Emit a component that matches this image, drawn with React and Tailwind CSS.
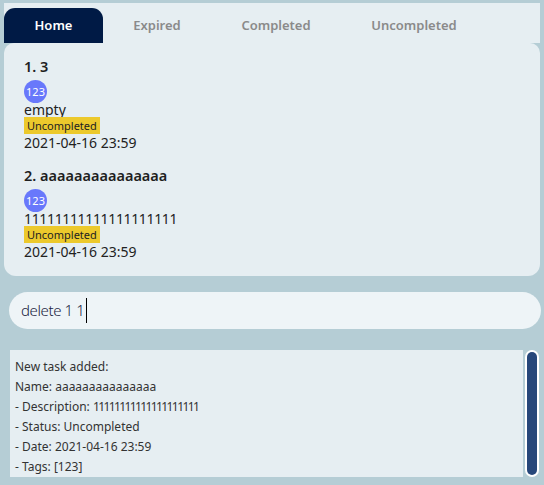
import React from "react";

const font = { fontFamily: '"Noto Sans", "Open Sans", sans-serif' };

function Task({ n, name, desc, ones }) {
  return (
    <div className="flex flex-col items-start">
      <div className="text-[14.5px] font-semibold text-[#1f1f1f] leading-[20px]">{n}. {name}</div>
      <div className="mt-[4px] w-[23px] h-[23px] rounded-full bg-[#6878fb] text-white text-[11px] flex items-center justify-center leading-none">123</div>
      <div className={"text-[14px] text-[#222] leading-[14px] " + (ones ? "tracking-[-0.35px]" : "")}>{desc}</div>
      <div className="bg-[#ecc92c] text-[11px] text-[#222] px-[3px] h-[17px] flex items-center leading-none">Uncompleted</div>
      <div className="text-[14px] text-[#222] leading-[18px]">2021-04-16 23:59</div>
    </div>
  );
}

export default function App() {
  return (
    <div className="w-[544px] h-[485px] bg-[#b5cdd5] overflow-hidden" style={font}>
      <div className="pl-[4px] pr-[4px] pt-[3px]">
        <div className="bg-[#e6eef2] h-[40px] flex items-end">
          <div className="h-[35px] w-[99px] bg-[#001a45] rounded-t-[11px] text-white text-[13px] font-semibold flex items-center justify-center">Home</div>
          <div className="h-[35px] w-[108px] text-[#8a8a8a] text-[13px] font-semibold flex items-center justify-center">Expired</div>
          <div className="h-[35px] w-[130px] text-[#8a8a8a] text-[13px] font-semibold flex items-center justify-center">Completed</div>
          <div className="h-[35px] w-[146px] text-[#8a8a8a] text-[13px] font-semibold flex items-center justify-center">Uncompleted</div>
        </div>
        <div className="bg-[#e6eef2] h-[233px] rounded-b-[12px] rounded-tl-[10px] rounded-tr-[10px] pl-[20px] pt-[13px] flex flex-col gap-[13px]">
          <Task n={1} name="3" desc="empty" />
          <Task n={2} name="aaaaaaaaaaaaaaa" desc="11111111111111111111" ones />
        </div>
      </div>
      <div className="mt-[16px] ml-[9px] mr-[3px] h-[37px] rounded-full bg-[#eef4f7] flex items-center pl-[12px]">
        <span className="text-[15px] font-light text-[#1a2340] tracking-[-0.4px]">delete 1 1</span>
        <span className="w-[1px] h-[25px] bg-black ml-[2px]"></span>
      </div>
      <div className="mt-[21px] ml-[10px] flex">
        <div className="w-[513px] h-[127px] bg-[#e6eef2] pl-[5px] pt-[7px] text-[12px] text-[#333] leading-[20px]">
          <div>New task added:</div>
          <div>Name: aaaaaaaaaaaaaaa</div>
          <div>- Description: <span className="tracking-[-1.6px]">11111111111111111111</span></div>
          <div>- Status: Uncompleted</div>
          <div>- Date: 2021-04-16 23:59</div>
          <div>- Tags: [123]</div>
        </div>
        <div className="ml-[2px] w-[14px] h-[127px] bg-white rounded-full p-[2px]">
          <div className="w-full h-full bg-[#27477a] rounded-full"></div>
        </div>
      </div>
    </div>
  );
}
